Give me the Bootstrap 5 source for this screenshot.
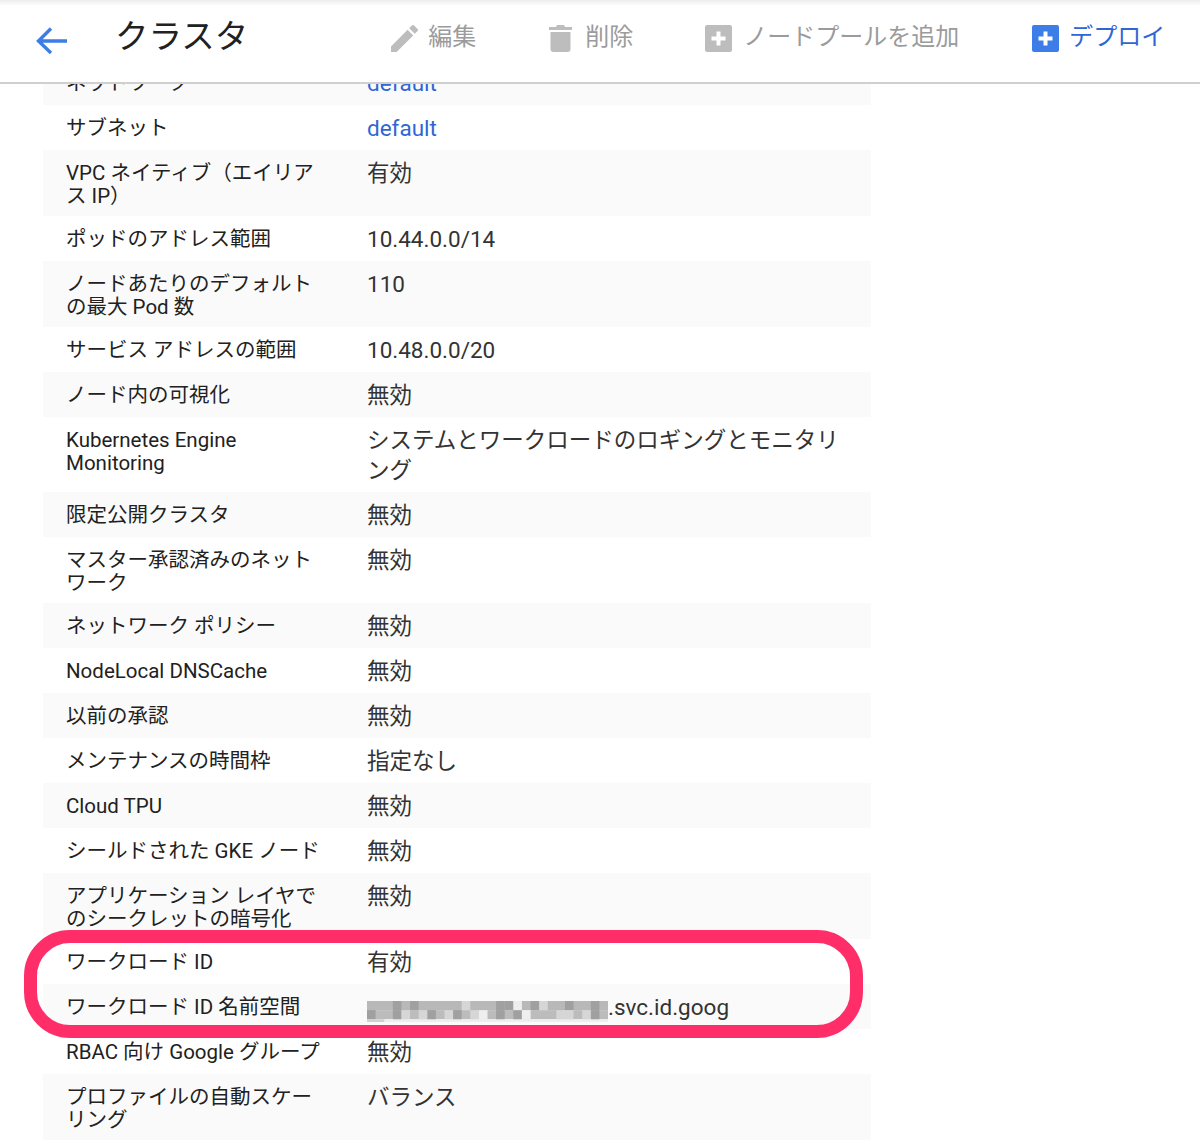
<!DOCTYPE html>
<html lang="ja"><head><meta charset="utf-8"><title>クラスタ</title>
<link href="https://cdn.jsdelivr.net/npm/bootstrap@5.3.0/dist/css/bootstrap.min.css" rel="stylesheet">
<style>
html,body{height:1145px;overflow:hidden}
body{font-family:Roboto,"Noto Sans CJK JP",sans-serif;background:#fff;color:#212121;position:relative}
.topbar{height:84px;border-bottom:2px solid #d0d0d0;padding:0 0 0 35px;background:linear-gradient(#ececec,#fff 6px)}
.back-ic{width:32px;height:32px;margin-top:-2px;flex:none}
.page-title{font-size:33.5px;margin:-8px 0 0 48px;font-weight:400;color:#212121;line-height:1.2;white-space:nowrap}
.acts{margin-top:-9px}
.act{font-size:24px;color:#9b9b9b;display:flex;align-items:center;line-height:1;white-space:nowrap}
.act svg{height:27px;flex:none;margin-top:4px}
.act.on{color:#2f66d6}
.act-edit{margin-left:143px;gap:10px}.act-edit svg{width:27px}
.act-del{margin-left:73px;gap:13px}.act-del svg{width:23px}
.act-add{margin-left:72px;gap:11px}.act-add svg{width:27px}
.act-dep{margin-left:73px;gap:10px}.act-dep svg{width:27px}
.viewport{height:1061px;overflow:hidden}
.dtable{width:828px;margin-left:43px;margin-top:-24px;table-layout:fixed;border-collapse:collapse}
.dtable td{vertical-align:top;padding:0;border:0}
.dtable tr:nth-child(odd) td{background:#fafafa}
.lab{width:324px;font-size:20.5px;line-height:23px;padding:12px 42px 8px 23px!important;color:#212121}
.val{font-size:22.5px;line-height:30px;padding:7.5px 30px 7.5px 0!important;color:#333}
.val a{color:#2f66d6;text-decoration:none}
.mosaic{display:inline-block;vertical-align:-7px;width:241px;height:21px;filter:blur(.6px)}
.ring{position:absolute;left:24px;top:930px;width:839px;height:108px;border:13px solid #ff2e69;border-radius:46px;pointer-events:none}
</style></head><body>
<header class="topbar d-flex align-items-center">
<svg class="back-ic" viewBox="0 0 32 32" fill="none" stroke="#3d7de8" stroke-width="3.4"><path d="M32 17H4M16 4.500 3.500 17 16 29"/></svg>
<h1 class="page-title">クラスタ</h1>
<div class="acts d-flex">
<span class="act act-edit"><svg viewBox="3 3 18 18" preserveAspectRatio="none" fill="#bdbdbd"><path d="M3 17.250V21h3.750L17.810 9.940l-3.750-3.750zM20.710 7.040a1 1 0 0 0 0-1.410l-2.340-2.340a1 1 0 0 0-1.410 0l-1.830 1.830 3.750 3.750z"/></svg>編集</span>
<span class="act act-del"><svg viewBox="0 0 23 27" fill="#bdbdbd"><path d="M1.500 7h20v17a3 3 0 0 1-3 3h-14a3 3 0 0 1-3-3zM0 2h7l1-2h7l1 2h7v3H0z"/></svg>削除</span>
<span class="act act-add"><svg viewBox="0 0 27 27"><rect width="27" height="27" rx="2" fill="#bdbdbd"/><path d="M13.500 6.500v14M6.500 13.500h14" stroke="#fff" stroke-width="4"/></svg>ノードプールを追加</span>
<span class="act act-dep on"><svg viewBox="0 0 27 27"><rect width="27" height="27" rx="2" fill="#3d7de8"/><path d="M13.500 6.500v14M6.500 13.500h14" stroke="#fff" stroke-width="4"/></svg>デプロイ</span>
</div>
</header>
<main class="viewport">
<table class="dtable"><tbody>
<tr><td class="lab">ネットワーク</td><td class="val"><a href="#">default</a></td></tr>
<tr><td class="lab">サブネット</td><td class="val"><a href="#">default</a></td></tr>
<tr><td class="lab">VPC ネイティブ（エイリアス IP）</td><td class="val">有効</td></tr>
<tr><td class="lab">ポッドのアドレス範囲</td><td class="val">10.44.0.0/14</td></tr>
<tr><td class="lab">ノードあたりのデフォルトの最大 Pod 数</td><td class="val">110</td></tr>
<tr><td class="lab">サービス アドレスの範囲</td><td class="val">10.48.0.0/20</td></tr>
<tr><td class="lab">ノード内の可視化</td><td class="val">無効</td></tr>
<tr><td class="lab">Kubernetes Engine Monitoring</td><td class="val">システムとワークロードのロギングとモニタリング</td></tr>
<tr><td class="lab">限定公開クラスタ</td><td class="val">無効</td></tr>
<tr><td class="lab">マスター承認済みのネットワーク</td><td class="val">無効</td></tr>
<tr><td class="lab">ネットワーク ポリシー</td><td class="val">無効</td></tr>
<tr><td class="lab">NodeLocal DNSCache</td><td class="val">無効</td></tr>
<tr><td class="lab">以前の承認</td><td class="val">無効</td></tr>
<tr><td class="lab">メンテナンスの時間枠</td><td class="val">指定なし</td></tr>
<tr><td class="lab">Cloud TPU</td><td class="val">無効</td></tr>
<tr><td class="lab">シールドされた GKE ノード</td><td class="val">無効</td></tr>
<tr><td class="lab">アプリケーション レイヤでのシークレットの暗号化</td><td class="val">無効</td></tr>
<tr><td class="lab">ワークロード ID</td><td class="val">有効</td></tr>
<tr><td class="lab">ワークロード ID 名前空間</td><td class="val"><svg class="mosaic" viewBox="0 0 28 2.300" preserveAspectRatio="none" aria-hidden="true"><rect y="0" width="28" height="1" fill="#b8b8b8"/><rect y="1" width="28" height="1" fill="#bcbcbc"/><rect y="2" width="28" height=".3" fill="#eee"/><g fill="#a0a0a0"><rect x="3" width="1" height="1"/><rect x="5" width="1" height="1"/><rect x="15" width="1" height="1"/><rect x="16" width="1" height="1"/><rect x="19" width="1" height="1"/><rect x="23" width="1" height="1"/><rect x="26" width="1" height="1"/><rect x="0" y="1" width="1" height="1"/><rect x="3" y="1" width="1" height="1"/><rect x="7" y="1" width="1" height="1"/><rect x="10" y="1" width="1" height="1"/><rect x="15" y="1" width="1" height="1"/><rect x="17" y="1" width="1" height="1"/><rect x="26" y="1" width="1" height="1"/></g><g fill="#d6d6d6"><rect x="4" y="1" width="1" height="1"/><rect x="6" y="1" width="1" height="1"/><rect x="9" y="1" width="1" height="1"/><rect x="12" y="1" width="1" height="1"/><rect x="18" y="1" width="1" height="1"/><rect x="22" y="1" width="2" height="1"/><rect x="25" y="1" width="1" height="1"/><rect x="11" width="1" height="1"/><rect x="20" width="1" height="1"/></g><g fill="#eeeeee"><rect x="13" y="1" width="1" height="1"/><rect x="17" width="1" height="1"/><rect x="18" y="1" width="1" height="1"/></g><rect x="0" y="2" width="2" height=".3" fill="#d0d0d0"/></svg>.svc.id.goog</td></tr>
<tr><td class="lab">RBAC 向け Google グループ</td><td class="val">無効</td></tr>
<tr><td class="lab">プロファイルの自動スケーリング</td><td class="val">バランス</td></tr>
</tbody></table>
</main>
<div class="ring"></div>
<script src="https://cdn.jsdelivr.net/npm/bootstrap@5.3.0/dist/js/bootstrap.bundle.min.js"></script>
</body></html>
